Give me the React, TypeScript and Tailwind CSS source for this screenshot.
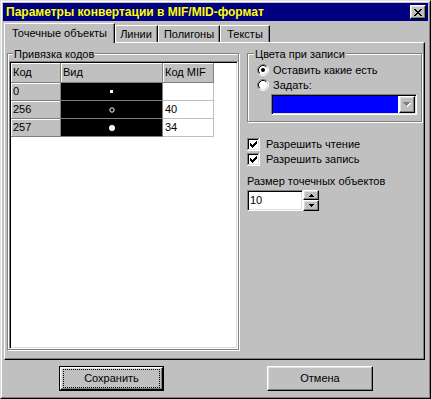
import React from "react";

const raised =
  "border border-t-white border-l-white border-b-black border-r-black shadow-[inset_-1px_-1px_0_#808080,inset_1px_1px_0_#dfdfdf]";
const sunken =
  "border border-t-[#808080] border-l-[#808080] border-b-white border-r-white shadow-[inset_1px_1px_0_#000,inset_-1px_-1px_0_#dfdfdf]";
const etched = "border border-[#808080] shadow-[inset_1px_1px_0_#fff,1px_1px_0_#fff]";

function CloseBtn() {
  return (
    <div className={`w-[16px] h-[14px] bg-[#c0c0c0] ${raised} flex items-center justify-center`}>
      <svg width="8" height="7" shapeRendering="crispEdges">
        <path
          d="M0 0h2v1H0z M6 0h2v1H6z M1 1h2v1H1z M5 1h2v1H5z M2 2h4v1H2z M3 3h2v1H3z M2 4h4v1H2z M1 5h2v1H1z M5 5h2v1H5z M0 6h2v1H0z M6 6h2v1H6z"
          fill="#000"
        />
      </svg>
    </div>
  );
}

function Radio({ checked }: { checked?: boolean }) {
  return (
    <svg width="12" height="12" className="shrink-0">
      <circle cx="6" cy="6" r="4.5" fill="#fff" />
      <path d="M2.11 9.89 A5.5 5.5 0 0 1 9.89 2.11" fill="none" stroke="#808080" strokeWidth="1" />
      <path d="M9.89 2.11 A5.5 5.5 0 0 1 2.11 9.89" fill="none" stroke="#fff" strokeWidth="1" />
      <path d="M2.82 9.18 A4.5 4.5 0 0 1 9.18 2.82" fill="none" stroke="#000" strokeWidth="1" />
      <path d="M9.18 2.82 A4.5 4.5 0 0 1 2.82 9.18" fill="none" stroke="#dfdfdf" strokeWidth="1" />
      {checked && <circle cx="6" cy="6" r="2" fill="#000" />}
    </svg>
  );
}

function Check() {
  return (
    <svg width="13" height="13" shapeRendering="crispEdges" className="shrink-0">
      <rect x="0" y="0" width="13" height="13" fill="#fff" />
      <path d="M0 0h12v1H1v11H0z" fill="#808080" />
      <path d="M1 1h10v1H2v9H1z" fill="#000" />
      <path d="M12 0h1v13H0v-1h12z" fill="#fff" />
      <path d="M11 1h1v11H1v-1h10z" fill="#dfdfdf" />
      <path
        d="M9 3h1v1H9z M8 4h2v1H8z M3 5h1v1H3z M7 5h3v1H7z M3 6h2v1H3z M6 6h3v1H6z M3 7h5v1H3z M4 8h3v1H4z M5 9h1v1H5z"
        fill="#000"
      />
    </svg>
  );
}

const rows = [
  { code: "0", sym: "sq", mif: "" },
  { code: "256", sym: "ring", mif: "40" },
  { code: "257", sym: "dot", mif: "34" },
];

const hdr =
  "bg-[#c0c0c0] border-r border-b border-[#808080] shadow-[inset_1px_1px_0_#fff] flex items-center pl-[2px] pb-[1px]";

function Grid() {
  return (
    <div className={`flex-1 bg-white ${sunken} p-[1px]`}>
      <div className="flex h-[20px]">
        <div className={`w-[50px] ${hdr}`}>Код</div>
        <div className={`w-[102px] ${hdr}`}>Вид</div>
        <div className={`w-[51px] ${hdr}`}>Код MIF</div>
      </div>
      {rows.map((r) => (
        <div key={r.code} className="flex h-[18px]">
          <div className={`w-[50px] ${hdr}`}>{r.code}</div>
          <div className="w-[102px] bg-black border-r border-b border-[#808080] flex items-center justify-center">
            {r.sym === "sq" && <div className="w-[3px] h-[3px] bg-white" />}
            {r.sym === "ring" && (
              <svg width="6" height="6">
                <circle cx="3" cy="3" r="2.2" fill="none" stroke="#fff" strokeWidth="1" />
              </svg>
            )}
            {r.sym === "dot" && <div className="w-[6px] h-[6px] rounded-full bg-white" />}
          </div>
          <div className="w-[51px] bg-white border-r border-b border-[#c0c0c0] flex items-center pl-[2px] pb-[1px]">
            {r.mif}
          </div>
        </div>
      ))}
    </div>
  );
}

function ComboBox() {
  return (
    <div className={`w-[146px] h-[21px] bg-white ${sunken} p-[1px] flex`}>
      <div className="flex-1 bg-[#0000ff] mr-[1px]" />
      <div className={`w-[16px] h-full bg-[#c0c0c0] ${raised} flex items-center justify-center`}>
        <svg width="8" height="5" shapeRendering="crispEdges">
          <path d="M1 1h7v1H1z M2 2h5v1H2z M3 3h3v1H3z M4 4h1v1H4z" fill="#fff" />
          <path d="M0 0h7v1H0z M1 1h5v1H1z M2 2h3v1H2z M3 3h1v1H3z" fill="#808080" />
        </svg>
      </div>
    </div>
  );
}

function Spin() {
  return (
    <div className="flex h-[21px]">
      <div className={`w-[56px] h-full bg-white ${sunken} flex items-center pl-[2px]`}>10</div>
      <div className="flex flex-col w-[16px]">
        <div className={`h-[10px] bg-[#c0c0c0] ${raised} flex items-center justify-center`}>
          <svg width="5" height="3" shapeRendering="crispEdges">
            <path d="M2 0h1v1H2z M1 1h3v1H1z M0 2h5v1H0z" fill="#000" />
          </svg>
        </div>
        <div className={`h-[11px] bg-[#c0c0c0] ${raised} flex items-center justify-center`}>
          <svg width="5" height="3" shapeRendering="crispEdges">
            <path d="M0 0h5v1H0z M1 1h3v1H1z M2 2h1v1H2z" fill="#000" />
          </svg>
        </div>
      </div>
    </div>
  );
}

export default function App() {
  return (
    <div className="w-[431px] h-[399px] bg-[#c0c0c0] border border-t-[#dfdfdf] border-l-[#dfdfdf] border-b-black border-r-black font-['Liberation_Sans',Arial,sans-serif] text-[11px] text-black leading-none select-none">
      <div className="h-full border border-t-white border-l-white border-b-[#808080] border-r-[#808080] p-px flex flex-col">
        {/* title bar */}
        <div className="h-[18px] shrink-0 bg-[#000080] flex items-center justify-between pl-[3px] pr-[2px]">
          <span className="text-[#ffff00] font-bold text-[12px]">Параметры конвертации в MIF/MID-формат</span>
          <CloseBtn />
        </div>
        {/* tabs */}
        <div className="h-[21px] shrink-0 flex items-end pl-px relative z-10">
          <div className="w-[111px] h-[20px] mb-[-1px] bg-[#c0c0c0] border-l border-t border-r border-t-white border-l-white border-r-black shadow-[inset_-1px_0_0_#808080] flex items-center justify-center pb-[1px]">
            Точечные объекты
          </div>
          <div className="w-[43px] h-[17px] border-t border-r border-t-white border-r-black shadow-[inset_-1px_0_0_#808080,inset_1px_0_0_#fff] flex items-center justify-center">
            Линии
          </div>
          <div className="w-[62px] h-[17px] border-l border-t border-r border-t-white border-l-white border-r-black shadow-[inset_-1px_0_0_#808080] flex items-center justify-center">
            Полигоны
          </div>
          <div className="w-[50px] h-[17px] border-l border-t border-r border-t-white border-l-white border-r-black shadow-[inset_-1px_0_0_#808080] flex items-center justify-center">
            Тексты
          </div>
        </div>
        {/* panel */}
        <div className="ml-px w-[421px] h-[318px] shrink-0 border border-t-white border-l-white border-b-black border-r-black shadow-[inset_-1px_-1px_0_#808080] flex pl-[2px] pt-[10px] gap-[8px]">
          {/* left group */}
          <div className={`relative w-[232px] h-[297px] ${etched} pl-px pt-[7px] flex`}>
            <span className="absolute left-[5px] top-[-5px] px-px bg-[#c0c0c0]">Привязка кодов</span>
            <Grid />
          </div>
          {/* right column */}
          <div className="w-[175px] flex flex-col">
            <div className={`relative h-[69px] ${etched} pl-[9px] pt-[10px] flex flex-col`}>
              <span className="absolute left-[6px] top-[-5px] px-px bg-[#c0c0c0]">Цвета при записи</span>
              <div className="flex items-center gap-[4px] h-[12px]">
                <Radio checked />
                <span>Оставить какие есть</span>
              </div>
              <div className="flex items-center gap-[4px] h-[12px] mt-[3px]">
                <Radio />
                <span>Задать:</span>
              </div>
              <div className="ml-[14px] mt-[3px]">
                <ComboBox />
              </div>
            </div>
            <div className="flex items-center gap-[6px] h-[13px] mt-[16px]">
              <Check />
              <span>Разрешить чтение</span>
            </div>
            <div className="flex items-center gap-[6px] h-[13px] mt-[2px]">
              <Check />
              <span>Разрешить запись</span>
            </div>
            <div className="mt-[10px] h-[11px]">Размер точечных объектов</div>
            <div className="mt-[3px]">
              <Spin />
            </div>
          </div>
        </div>
        {/* buttons */}
        <div className="flex mt-[6px] pl-[56px] gap-[103px]">
          <div className="w-[105px] h-[25px] border border-black">
            <div className={`h-full ${raised} flex items-center justify-center`}>
              <div className="w-[97px] h-[19px] border border-dotted border-black flex items-center justify-center">
                Сохранить
              </div>
            </div>
          </div>
          <div className={`w-[106px] h-[25px] ${raised} flex items-center justify-center`}>Отмена</div>
        </div>
      </div>
    </div>
  );
}
